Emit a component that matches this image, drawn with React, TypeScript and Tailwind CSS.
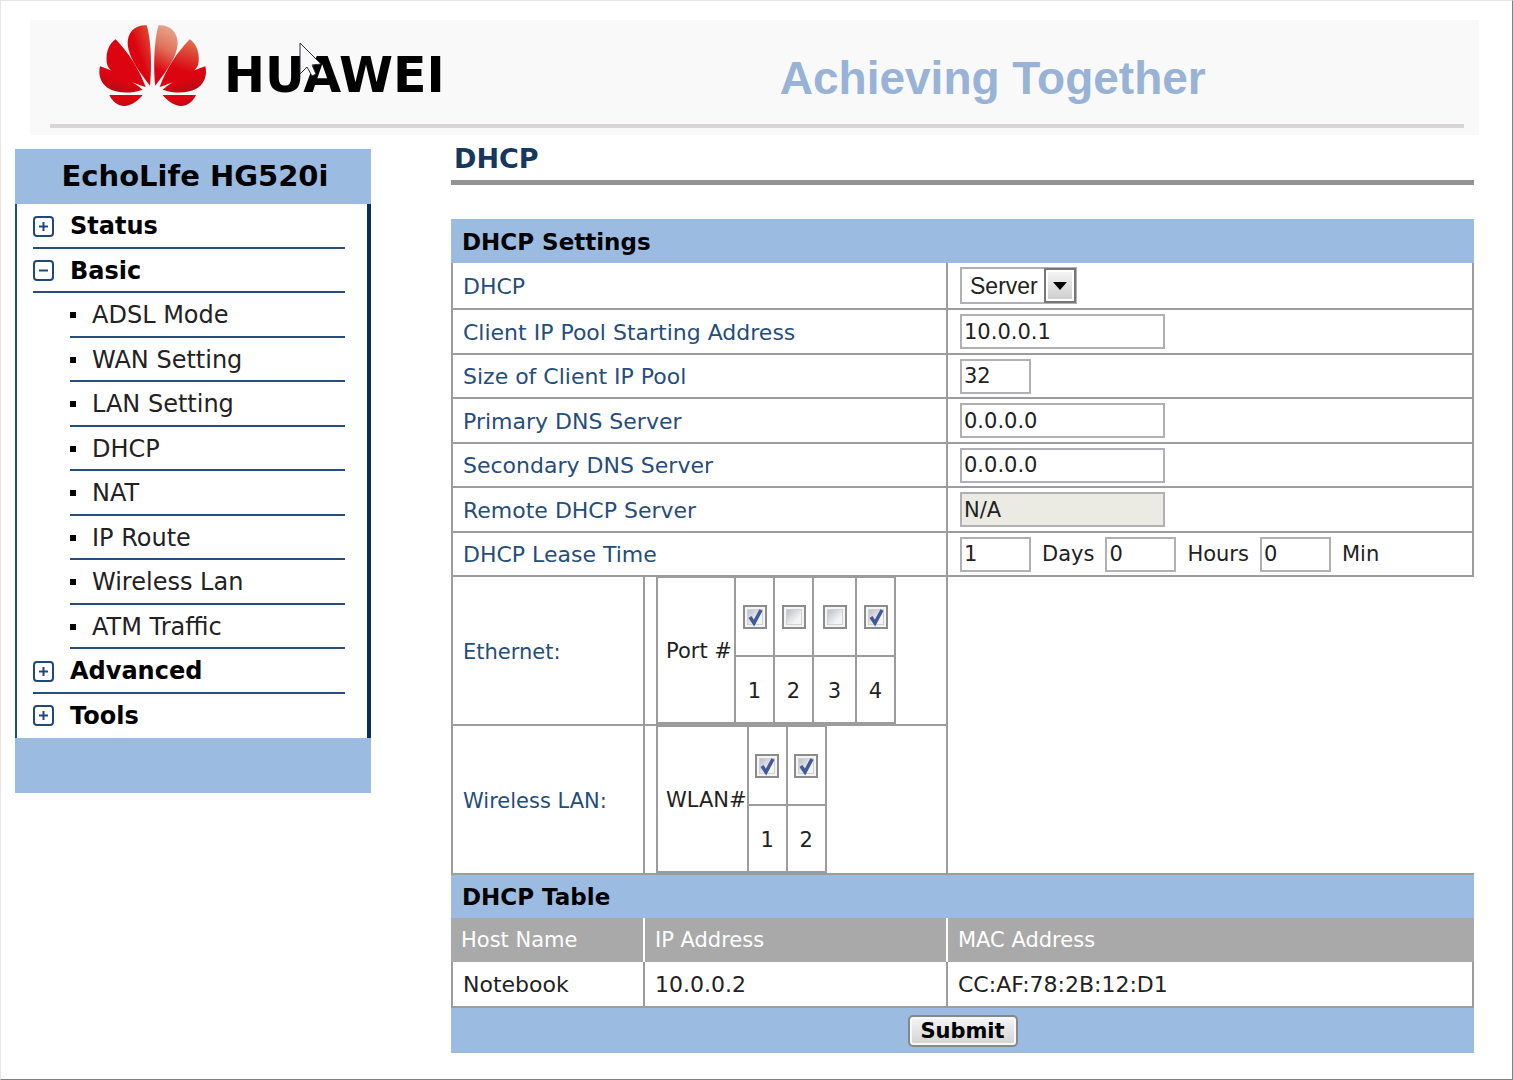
import { useState } from 'react';
import type { ReactNode } from 'react';
import clsx from 'clsx';

const subItems = [
    'ADSL Mode',
    'WAN Setting',
    'LAN Setting',
    'DHCP',
    'NAT',
    'IP Route',
    'Wireless Lan',
    'ATM Traffic',
];

const leases = [{ host: 'Notebook', ip: '10.0.0.2', mac: 'CC:AF:78:2B:12:D1' }];

const cell = 'border-b-2 border-r-2 border-[#9c9c9c] text-left font-normal';
const labelCell = 'border-l-2 pl-[10px] pt-[2px] text-[#264d7b]';

function Petals({ top, side }: { top: string; side: string }) {
    return (
        <>
            <path fill={top} d="M450 256C456 205 454 118 440 75C404 73 382 98 383 130C385 172 424 222 450 256Z" />
            <path fill={side} d="M437 260C418 208 386 157 347 117C330 128 317 152 320 184C323 219 372 238 437 260Z" />
            <path fill="url(#petalDark)" d="M428 268C394 240 345 212 300 198C293 226 304 254 330 267C352 279 394 280 428 268Z" />
            <path fill="url(#petalDark)" d="M428 284L328 284C338 305 355 318 375 317C399 314 415 300 428 284Z" />
        </>
    );
}

function HuaweiLogo() {
    return (
        <svg className="h-[83px] w-[110px]" viewBox="294 71 330 249" aria-hidden="true">
            <defs>
                <linearGradient id="petalDark" x1="0" y1="1" x2="0.6" y2="0">
                    <stop offset="0" stopColor="#a80f18" />
                    <stop offset="0.6" stopColor="#dc0410" />
                </linearGradient>
                <linearGradient id="petalRed" x1="0" y1="1" x2="1" y2="0">
                    <stop offset="0.5" stopColor="#dc0410" />
                    <stop offset="1" stopColor="#e0583c" />
                </linearGradient>
                <linearGradient id="petalLight" x1="0.4" y1="0" x2="0.6" y2="1">
                    <stop offset="0" stopColor="#e8a890" />
                    <stop offset="0.4" stopColor="#e07058" />
                    <stop offset="0.8" stopColor="#dc0410" />
                </linearGradient>
                <linearGradient id="petalOrange" x1="0.3" y1="0" x2="0.5" y2="0.8">
                    <stop offset="0" stopColor="#e07050" />
                    <stop offset="0.8" stopColor="#dc0410" />
                </linearGradient>
            </defs>
            <Petals top="url(#petalRed)" side="#dc0410" />
            <g transform="translate(916 0) scale(-1 1)">
                <Petals top="url(#petalLight)" side="url(#petalOrange)" />
            </g>
        </svg>
    );
}

function Header() {
    return (
        <header className="mr-[33px] ml-[29px] h-[115px] bg-[#f9f9f9] pr-[15px] pl-5">
            <div className="flex h-[108px] items-start border-b-4 border-[#d9d6d8] pt-1">
                <div className="relative ml-12 flex items-center">
                    <HuaweiLogo />
                    <span className="ml-4 pt-5 text-[49px] leading-[63px] font-bold text-black">HUAWEI</span>
                    <svg className="absolute top-[18px] left-[201px] h-9 w-6" viewBox="0 0 24 36" aria-hidden="true">
                        <path d="M1 1V32L8 25L13 34L17 32L13 23L22 22Z" fill="#f9f9f9" stroke="#2a2a40" />
                    </svg>
                </div>
                <p className="mt-5 ml-[335px] font-['Liberation_Sans',Arial,sans-serif] text-[46px] leading-[68px] font-bold text-[#98b3d6]">
                    Achieving Together
                </p>
            </div>
        </header>
    );
}

function ToggleIcon({ open }: { open: boolean }) {
    return (
        <svg className="size-[21px]" viewBox="0 0 21 21" fill="none" stroke="#1f497d" strokeWidth="2" aria-hidden="true">
            <rect x="1" y="1" width="19" height="19" rx="3" />
            <path d="M6 10.5H15" />
            {!open && <path d="M10.5 6V15" />}
        </svg>
    );
}

function MenuGroup({ label, open = false, last = false }: { label: string; open?: boolean; last?: boolean }) {
    return (
        <li className={clsx('flex flex-1 items-center border-b-2 pt-[2px]', last ? 'border-transparent' : 'border-[#264d7b]')}>
            <a href="#" className="flex items-center gap-4 font-bold">
                <ToggleIcon open={open} />
                {label}
            </a>
        </li>
    );
}

function Sidebar() {
    return (
        <nav className="mt-[9px] w-[356px] shrink-0 text-2xl leading-8 text-black">
            <h2 className="h-[55px] bg-[#9bbbe1] pl-1 text-center text-[29px] leading-[55px] font-bold">
                EchoLife HG520i
            </h2>
            <ul className="flex h-[534px] flex-col border-r-4 border-l-2 border-r-[#0c2c5c] border-l-[#264d7b] pr-[22px] pl-4">
                <MenuGroup label="Status" />
                <MenuGroup label="Basic" open />
                {subItems.map((item) => (
                    <li key={item} className="ml-[37px] flex flex-1 items-center border-b-2 border-[#264d7b] pt-[2px]">
                        <span className="mr-4 size-[6px] bg-black" />
                        <a href="#" className="font-normal text-[#222]">{item}</a>
                    </li>
                ))}
                <MenuGroup label="Advanced" />
                <MenuGroup label="Tools" last />
            </ul>
            <div className="h-[55px] bg-[#9bbbe1]" />
        </nav>
    );
}

function TextBox({ id, value, small = false, disabled = false }: { id: string; value: string; small?: boolean; disabled?: boolean }) {
    return (
        <input
            id={id}
            type="text"
            defaultValue={value}
            disabled={disabled}
            className={clsx(
                'block h-[35px] border-2 border-[#b0b0b5] px-[2px] text-[#222]',
                small ? 'w-[71px]' : 'w-[205px]',
                disabled ? 'bg-[#ebebe4]' : 'bg-white'
            )}
        />
    );
}

function SettingRow({ id, label, children }: { id: string; label: string; children: ReactNode }) {
    return (
        <tr className="odd:h-[45px] even:h-[44px]">
            <th scope="row" colSpan={2} className={clsx(cell, labelCell, 'text-[22px]')}>
                <label htmlFor={id}>{label}</label>
            </th>
            <td className={clsx(cell, 'pl-3')}>{children}</td>
        </tr>
    );
}

function CheckBox({ label, checked }: { label: string; checked: boolean }) {
    const [on, setOn] = useState(checked);

    return (
        <span className="relative mx-auto block size-6">
            <input
                type="checkbox"
                aria-label={label}
                checked={on}
                onChange={(e) => setOn(e.target.checked)}
                className="block size-6 appearance-none border-2 border-[#8c8c8c] bg-[#f4f4f4]"
            />
            <svg className="pointer-events-none absolute inset-0 size-6" viewBox="0 0 24 24" fill="none" aria-hidden="true">
                <defs>
                    <linearGradient id="boxShade" x1="0" y1="0" x2="1" y2="1">
                        <stop offset="0" stopColor="#b8bcc6" />
                        <stop offset="0.7" stopColor="#f4f4f4" />
                    </linearGradient>
                </defs>
                <rect x="4.5" y="4.5" width="15" height="15" fill="url(#boxShade)" stroke="#cfd1d6" />
                {on && <path d="M7 12L11 18L18 5" stroke="#41599b" strokeWidth="3.5" />}
            </svg>
        </span>
    );
}

function PortTable({ label, name, ports }: { label: string; name: string; ports: boolean[] }) {
    const line = 'border-[#9c9c9c] border-r-2 border-b-2';

    return (
        <table className="h-[147px] border-separate border-spacing-0 border-t border-l-2 border-[#9c9c9c] text-center text-[#222]">
            <tbody>
                <tr className="h-[79px]">
                    <th scope="row" rowSpan={2} className={clsx(line, 'min-w-[78px] pt-[2px] pl-2 text-left font-normal whitespace-nowrap')}>
                        {label}
                    </th>
                    {ports.map((on, i) => (
                        <td key={i} className={clsx(line, i === 2 ? 'w-[43px]' : 'w-[39px]')}>
                            <CheckBox label={`${name} ${i + 1}`} checked={on} />
                        </td>
                    ))}
                </tr>
                <tr className="h-[67px]">
                    {ports.map((_, i) => (
                        <td key={i} className={clsx(line, 'pt-[2px]')}>{i + 1}</td>
                    ))}
                </tr>
            </tbody>
        </table>
    );
}

function DhcpTable() {
    return (
        <table className="mt-[34px] w-full table-fixed border-separate border-spacing-0 text-[21px] leading-7 text-[#222]">
            <colgroup>
                <col className="w-[194px]" />
                <col className="w-[303px]" />
                <col />
            </colgroup>
            <tbody>
                <tr className="h-11">
                    <th colSpan={3} className="bg-[#9bbbe1] pt-[2px] pl-[11px] text-left text-[23px] font-bold text-black">DHCP Settings</th>
                </tr>
                <tr className="h-[47px]">
                    <th scope="row" colSpan={2} className={clsx(cell, labelCell, 'text-[22px]')}>
                        <label htmlFor="mode">DHCP</label>
                    </th>
                    <td className={clsx(cell, 'pl-3')}>
                        <div className="relative w-[117px]">
                            <select
                                id="mode"
                                defaultValue="Server"
                                className="block h-[37px] w-full appearance-none border-2 border-[#b0b0b5] bg-white pl-2 font-['Liberation_Sans',Arial,sans-serif] text-[23px]"
                            >
                                <option>Server</option>
                                <option>None</option>
                                <option>Relay</option>
                            </select>
                            <span className="pointer-events-none absolute top-[1px] right-[1px] flex h-[35px] w-8 items-center justify-center border-2 border-[#777] bg-white p-[2px]">
                                <span className="flex size-full items-center justify-center bg-linear-to-b from-[#f4f4f4] to-[#cfcfcf]">
                                    <svg className="h-2 w-[14px]" viewBox="0 0 14 8" aria-hidden="true">
                                        <path d="M0 0H14L7 8Z" fill="black" />
                                    </svg>
                                </span>
                            </span>
                        </div>
                    </td>
                </tr>
                <SettingRow id="start" label="Client IP Pool Starting Address"><TextBox id="start" value="10.0.0.1" /></SettingRow>
                <SettingRow id="size" label="Size of Client IP Pool"><TextBox id="size" value="32" small /></SettingRow>
                <SettingRow id="dns1" label="Primary DNS Server"><TextBox id="dns1" value="0.0.0.0" /></SettingRow>
                <SettingRow id="dns2" label="Secondary DNS Server"><TextBox id="dns2" value="0.0.0.0" /></SettingRow>
                <SettingRow id="remote" label="Remote DHCP Server"><TextBox id="remote" value="N/A" disabled /></SettingRow>
                <SettingRow id="days" label="DHCP Lease Time">
                    <div className="flex items-center gap-[11px]">
                        <TextBox id="days" value="1" small />
                        <label htmlFor="days">Days</label>
                        <TextBox id="hours" value="0" small />
                        <label htmlFor="hours">Hours</label>
                        <TextBox id="min" value="0" small />
                        <label htmlFor="min">Min</label>
                    </div>
                </SettingRow>

                {/* Port bindings */}
                <tr className="h-[149px]">
                    <th scope="row" className={clsx(cell, labelCell)}>Ethernet:</th>
                    <td className="border-r-2 border-b-2 border-[#9c9c9c] py-0 pr-0 pl-[11px]">
                        <PortTable label="Port #" name="Port" ports={[true, false, false, true]} />
                    </td>
                    <td rowSpan={2} className="border-b-2 border-[#9c9c9c]" />
                </tr>
                <tr className="h-[149px]">
                    <th scope="row" className={clsx(cell, labelCell)}>Wireless LAN:</th>
                    <td className="border-r-2 border-b-2 border-[#9c9c9c] py-0 pr-0 pl-[11px]">
                        <PortTable label="WLAN#" name="WLAN" ports={[true, true]} />
                    </td>
                </tr>

                {/* Leases */}
                <tr className="h-[43px]">
                    <th colSpan={3} className="bg-[#9bbbe1] pl-[11px] text-left text-[23px] font-bold text-black">DHCP Table</th>
                </tr>
                <tr className="h-11 bg-[#a9a9a9] text-left text-white">
                    <th scope="col" className="border-r-2 border-white pl-[10px] font-normal">Host Name</th>
                    <th scope="col" className="border-r-2 border-white pl-[10px] font-normal">IP Address</th>
                    <th scope="col" className="pl-[10px] font-normal">MAC Address</th>
                </tr>
                {leases.map((lease) => (
                    <tr key={lease.mac} className="h-[46px] text-[22px]">
                        <td className={clsx(cell, 'border-l-2 pt-[2px] pl-[10px]')}>{lease.host}</td>
                        <td className={clsx(cell, 'pt-[2px] pl-[10px]')}>{lease.ip}</td>
                        <td className={clsx(cell, 'pt-[2px] pl-[10px]')}>{lease.mac}</td>
                    </tr>
                ))}
                <tr className="h-[45px]">
                    <td colSpan={3} className="bg-[#9bbbe1]">
                        <button
                            type="submit"
                            className="mx-auto block h-8 w-[110px] rounded-[5px] border-2 border-[#888] bg-linear-to-b from-[#f6f6f6] to-[#d2d2d2] leading-7 font-bold text-black shadow-[inset_0_0_0_2px_#f8f8f8]"
                        >
                            Submit
                        </button>
                    </td>
                </tr>
            </tbody>
        </table>
    );
}

export default function App() {
    return (
        <div className="min-h-screen border border-t-[#e6e6e6] border-r-[#808080] border-b-[#808080] border-l-[#e6e6e6] bg-white pt-[19px] font-['DejaVu_Sans',Verdana,sans-serif]">
            <Header />
            <div className="flex items-start pt-[5px] pr-[38px] pl-[14px]">
                <Sidebar />
                <main className="ml-20 min-w-0 flex-1">
                    <h1 className="border-b-[5px] border-[#939393] pt-[1px] pb-[3px] pl-[3px] text-[27px] leading-9 font-bold text-[#17375e]">DHCP</h1>
                    <form onSubmit={(e) => e.preventDefault()}>
                        <DhcpTable />
                    </form>
                </main>
            </div>
        </div>
    );
}
